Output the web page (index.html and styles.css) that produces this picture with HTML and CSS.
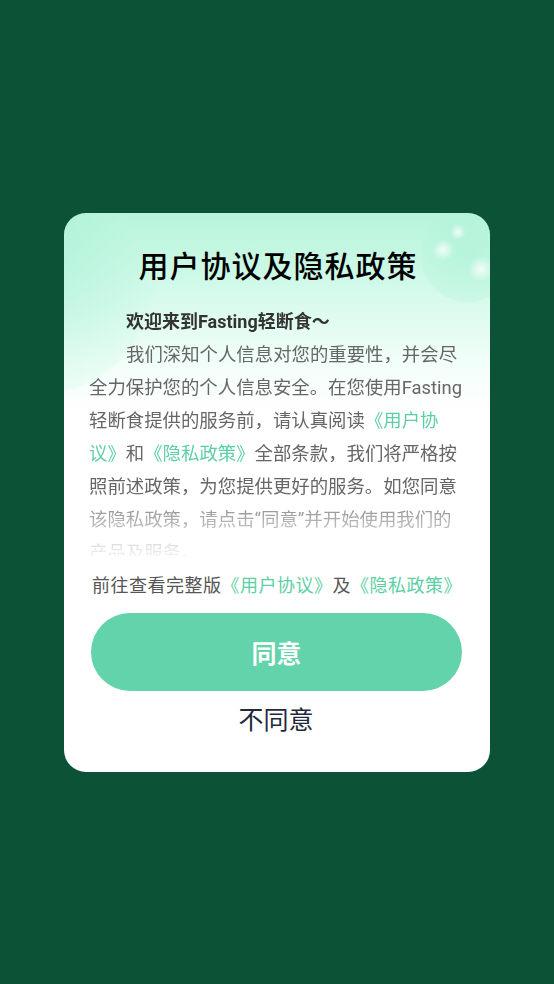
FILE: index.html
```html
<!DOCTYPE html>
<html lang="zh-CN">
<head>
  <meta charset="UTF-8">
  <meta name="viewport" content="width=device-width, initial-scale=1.0">
  <title>用户协议及隐私政策</title>
  <link rel="stylesheet" href="styles.css">
</head>
<body>
  <div class="overlay">
    <div class="dialog">
      <div class="deco deco-left"></div>
      <div class="deco deco-right">
        <span class="bubble b1"></span>
        <span class="bubble b2"></span>
        <span class="bubble b3"></span>
      </div>

      <h1 class="dialog-title">用户协议及隐私政策</h1>

      <div class="policy-text">
        <p class="intro">欢迎来到Fasting轻断食～</p>
        <p class="body">
          <span class="indent">我们深知个人信息对您的重要性，并会尽</span><br>
          全力保护您的个人信息安全。在您使用Fasting<br>
          轻断食提供的服务前，请认真阅读<a href="#">《用户协<br>议》</a>和<a href="#">《隐私政策》</a>全部条款，我们将严格按<br>
          照前述政策，为您提供更好的服务。如您同意<br>
          该隐私政策，请点击“同意”并开始使用我们的<br>
          产品及服务。
        </p>
      </div>

      <p class="full-link">前往查看完整版<a href="#">《用户协议》</a>及<a href="#">《隐私政策》</a></p>

      <button class="btn-agree" type="button">同意</button>
      <button class="btn-refuse" type="button">不同意</button>
    </div>
  </div>
</body>
</html>
```

FILE: styles.css
```css
* {
  box-sizing: border-box;
}
body {
  margin: 0;
  background-color: #0b5236;
  font-family: Roboto, "Noto Sans CJK SC", sans-serif;
}
.overlay {
  height: 984px;
  display: flex;
  align-items: center;
  justify-content: center;
}
.dialog {
  position: relative;
  overflow: hidden;
  width: 426px;
  padding: 34px 27px 33px 25px;
  border-radius: 22px;
  background: linear-gradient(180deg, #b6f4db 0%, #d4faea 14%, #f2fef9 27%, #ffffff 36%);
  display: flex;
  flex-direction: column;
}
.deco {
  position: absolute;
  border-radius: 50%;
  pointer-events: none;
}
.deco-left {
  left: -70px;
  top: -20px;
  width: 160px;
  height: 200px;
  background: radial-gradient(ellipse at 30% 40%, rgba(160, 240, 210, 0.5) 0%, rgba(200, 248, 228, 0.25) 70%, rgba(255, 255, 255, 0) 72%);
}
.deco-right {
  right: -26px;
  top: -6px;
  width: 96px;
  height: 96px;
  background: radial-gradient(circle at 50% 50%, rgba(165, 240, 210, 0.45) 0%, rgba(180, 244, 218, 0.35) 68%, rgba(255, 255, 255, 0) 71%);
}
.bubble {
  position: absolute;
  border-radius: 50%;
  background: radial-gradient(circle, rgba(255, 255, 255, 0.8) 0%, rgba(255, 255, 255, 0) 70%);
}
.b1 {
  left: 12px;
  top: 32px;
  width: 22px;
  height: 22px;
}
.b2 {
  left: 30px;
  top: 17px;
  width: 16px;
  height: 16px;
}
.b3 {
  left: 48px;
  top: 49px;
  width: 26px;
  height: 26px;
}
.dialog-title {
  position: relative;
  margin: 0;
  padding-left: 4px;
  font-size: 30px;
  line-height: 40px;
  font-weight: 500;
  color: #000;
  text-align: center;
  letter-spacing: 1px;
}
.policy-text {
  position: relative;
  margin-top: 18px;
  height: 251px;
  overflow: hidden;
  -webkit-mask-image: linear-gradient(180deg, #000 0%, #000 74%, rgba(0, 0, 0, 0.5) 86%, rgba(0, 0, 0, 0.08) 100%);
  mask-image: linear-gradient(180deg, #000 0%, #000 74%, rgba(0, 0, 0, 0.5) 86%, rgba(0, 0, 0, 0.08) 100%);
}
.policy-text p {
  margin: 0;
  line-height: 33px;
  white-space: nowrap;
}
.intro {
  padding-left: 37px;
  font-size: 18px;
  font-weight: 700;
  color: #333;
}
.body {
  font-size: 18.4px;
  color: #666;
}
.indent {
  padding-left: 37px;
}
a {
  color: #5ccfa4;
  text-decoration: none;
}
.full-link {
  margin: 13px 0 0;
  padding-left: 3px;
  font-size: 18px;
  letter-spacing: 0.5px;
  line-height: 33px;
  color: #555;
  white-space: nowrap;
}
.btn-agree {
  margin: 11px 0 0 2px;
  width: 371px;
  height: 78px;
  border: none;
  border-radius: 39px;
  background-color: #62d3aa;
  color: #fff;
  font-family: inherit;
  font-size: 25px;
  font-weight: 700;
  cursor: pointer;
}
.btn-refuse {
  margin-top: 12px;
  height: 36px;
  border: none;
  background: none;
  color: #1e2a3b;
  font-family: inherit;
  font-size: 25px;
  line-height: 36px;
  padding: 0;
  cursor: pointer;
}
```
